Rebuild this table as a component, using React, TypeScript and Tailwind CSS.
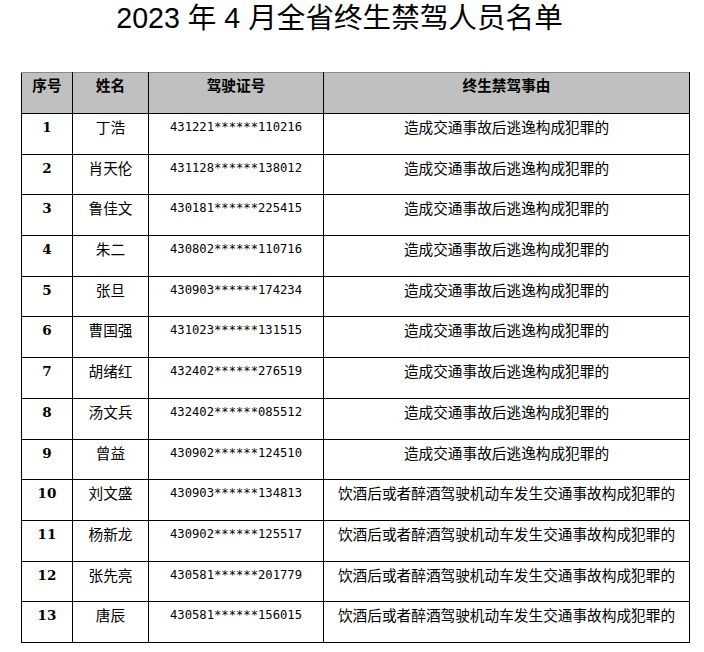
import React from "react"

const rows = [
  ["1", "丁浩", "431221******110216", "造成交通事故后逃逸构成犯罪的"],
  ["2", "肖天伦", "431128******138012", "造成交通事故后逃逸构成犯罪的"],
  ["3", "鲁佳文", "430181******225415", "造成交通事故后逃逸构成犯罪的"],
  ["4", "朱二", "430802******110716", "造成交通事故后逃逸构成犯罪的"],
  ["5", "张旦", "430903******174234", "造成交通事故后逃逸构成犯罪的"],
  ["6", "曹国强", "431023******131515", "造成交通事故后逃逸构成犯罪的"],
  ["7", "胡绪红", "432402******276519", "造成交通事故后逃逸构成犯罪的"],
  ["8", "汤文兵", "432402******085512", "造成交通事故后逃逸构成犯罪的"],
  ["9", "曾益", "430902******124510", "造成交通事故后逃逸构成犯罪的"],
  ["10", "刘文盛", "430903******134813", "饮酒后或者醉酒驾驶机动车发生交通事故构成犯罪的"],
  ["11", "杨新龙", "430902******125517", "饮酒后或者醉酒驾驶机动车发生交通事故构成犯罪的"],
  ["12", "张先亮", "430581******201779", "饮酒后或者醉酒驾驶机动车发生交通事故构成犯罪的"],
  ["13", "唐辰", "430581******156015", "饮酒后或者醉酒驾驶机动车发生交通事故构成犯罪的"],
]

const cjk = "font-['Noto_Sans_CJK_SC',sans-serif]"

export default function App() {
  return (
    <div className={`min-h-[652px] w-[704px] bg-white text-black ${cjk}`}>
      <h1 className="w-[679px] text-center text-[28.6px] leading-[36px] font-['Liberation_Sans','Noto_Sans_CJK_SC',sans-serif]">
        2023 年 4 月全省终生禁驾人员名单
      </h1>

      <table className="mt-[36px] ml-[21px] w-[668px] table-fixed border-collapse text-[14.67px] leading-[20px]">
        <colgroup>
          <col className="w-[51px]" />
          <col className="w-[76px]" />
          <col className="w-[175px]" />
          <col className="w-[366px]" />
        </colgroup>
        <thead>
          <tr className="h-[41px] bg-[#c0c0c0] font-bold">
            <th className="border border-black border-t-[#8a8a8a] pb-[14px] align-top pt-[2px]">序号</th>
            <th className="border border-black border-t-[#8a8a8a] pb-[14px] align-top pt-[2px]">姓名</th>
            <th className="border border-black border-t-[#8a8a8a] pb-[14px] align-top pt-[2px]">驾驶证号</th>
            <th className="border border-black border-t-[#8a8a8a] pb-[14px] align-top pt-[2px]">终生禁驾事由</th>
          </tr>
        </thead>
        <tbody>
          {rows.map((r) => (
            <tr key={r[0]} className="h-[40.7px]">
              <td className="border border-black pt-[3px] align-top text-center font-bold font-['DejaVu_Serif',serif] text-[13.5px]">
                {r[0]}
              </td>
              <td className="border border-black pt-[3px] align-top text-center">{r[1]}</td>
              <td className="border border-black pt-[3px] align-top text-center font-['DejaVu_Sans_Mono',monospace] text-[12.2px]">
                {r[2]}
              </td>
              <td className="border border-black pt-[3px] align-top text-center whitespace-nowrap">{r[3]}</td>
            </tr>
          ))}
        </tbody>
      </table>
    </div>
  )
}
